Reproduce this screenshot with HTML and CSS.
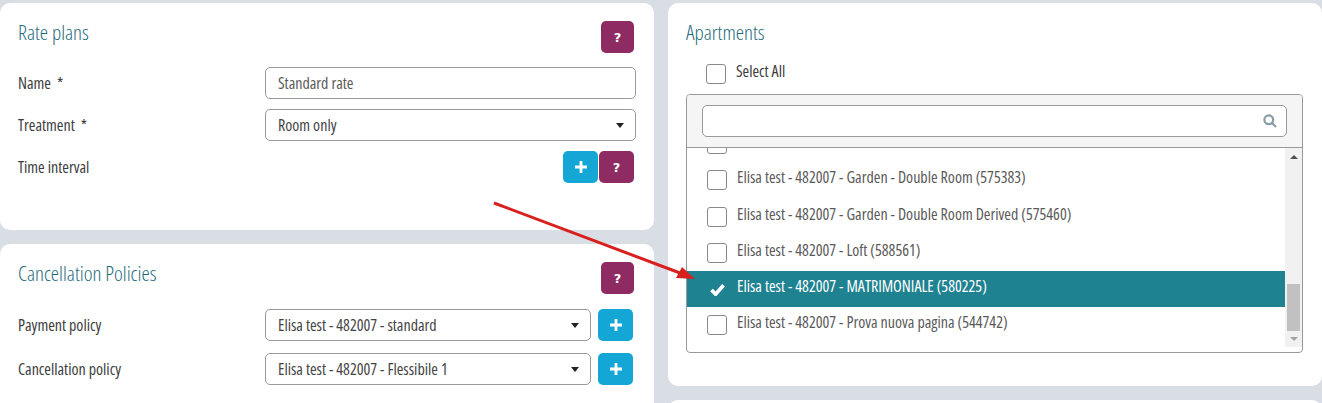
FILE: index.html
```html
<!DOCTYPE html>
<html>
<head>
    <title>Rate plans</title>
    <link rel="stylesheet" href="styles.css">
</head>
<body>

<div class="page">
    <div class="col">
        <div class="card card-rates">
            <div class="card-head">
                <h2>Rate plans</h2>
                <a class="btn btn-help">?</a>
            </div>
            <div class="form-row first">
                <label>Name &nbsp;*</label>
                <div class="control">Standard rate</div>
            </div>
            <div class="form-row">
                <label>Treatment &nbsp;*</label>
                <div class="control select">Room only<span class="caret"></span></div>
            </div>
            <div class="form-row">
                <label>Time interval</label>
                <div class="btn-group">
                    <a class="btn btn-add"><svg viewBox="0 0 12 12"><path d="M4.6 0h2.8v4.6H12v2.8H7.4V12H4.6V7.4H0V4.6h4.6z"/></svg></a>
                    <a class="btn btn-help">?</a>
                </div>
            </div>
        </div>

        <div class="card card-policies">
            <div class="card-head">
                <h2>Cancellation Policies</h2>
                <a class="btn btn-help">?</a>
            </div>
            <div class="form-row first">
                <label>Payment policy</label>
                <div class="control select">Elisa test - 482007 - standard<span class="caret"></span></div>
                <a class="btn btn-add"><svg viewBox="0 0 12 12"><path d="M4.6 0h2.8v4.6H12v2.8H7.4V12H4.6V7.4H0V4.6h4.6z"/></svg></a>
            </div>
            <div class="form-row">
                <label>Cancellation policy</label>
                <div class="control select">Elisa test - 482007 - Flessibile 1<span class="caret"></span></div>
                <a class="btn btn-add"><svg viewBox="0 0 12 12"><path d="M4.6 0h2.8v4.6H12v2.8H7.4V12H4.6V7.4H0V4.6h4.6z"/></svg></a>
            </div>
        </div>
    </div>

    <div class="col">
        <div class="card card-apartments">
            <h2>Apartments</h2>
            <div class="select-all">
                <span class="check"></span>
                <span class="item-text">Select All</span>
            </div>
            <div class="picker">
                <div class="picker-head">
                    <div class="search">
                        <svg viewBox="0 0 14 14"><circle cx="5.8" cy="5.8" r="4.4"/><path d="M9 9l4 4"/></svg>
                    </div>
                </div>
                <div class="picker-body">
                    <div class="list">
                        <div class="item"><span class="check"></span></div>
                        <div class="item"><span class="check"></span><span class="item-text">Elisa test - 482007 - Garden - Double Room (575383)</span></div>
                        <div class="item"><span class="check"></span><span class="item-text">Elisa test - 482007 - Garden - Double Room Derived (575460)</span></div>
                        <div class="item"><span class="check"></span><span class="item-text">Elisa test - 482007 - Loft (588561)</span></div>
                        <div class="item selected">
                            <span class="tick"><svg viewBox="0 0 16 14"><path d="M1.5 7.5l4.5 4.5 8.5-9.5"/></svg></span>
                            <span class="item-text">Elisa test - 482007 - MATRIMONIALE (580225)</span>
                        </div>
                        <div class="item"><span class="check"></span><span class="item-text">Elisa test - 482007 - Prova nuova pagina (544742)</span></div>
                    </div>
                    <div class="scrollbar">
                        <span class="arrow-up"></span>
                        <span class="thumb"></span>
                        <span class="arrow-down"></span>
                    </div>
                </div>
            </div>
        </div>
        <div class="card card-next"></div>
    </div>
</div>

<svg class="pointer" viewBox="0 0 210 85" width="210" height="85">
    <path class="pointer-line" d="M4 3L190 73"/>
    <path class="pointer-head" d="M205 79L186 78L192 67z"/>
</svg>

</body>
</html>
```

FILE: styles.css
```css
html, body {
    margin: 0;
    height: 403px;
    overflow: hidden;
}
body {
    position: relative;
    background: #d9dde4;
    font-family: "Open Sans", "Liberation Sans", sans-serif;
    font-stretch: 75%;
    font-size: 16px;
    color: #3d3d3d;
}
.page {
    display: grid;
    grid-template-columns: 654px 654px;
    column-gap: 14px;
    padding-top: 3px;
}
.col {
    display: flex;
    flex-direction: column;
    row-gap: 14px;
}
.card {
    box-sizing: border-box;
    background: #fff;
    border-radius: 10px;
    padding: 18px 18px 0;
}
.card-rates { height: 227px; }
.card-policies { height: 170px; }
.card-apartments { height: 383px; }
.card-next { height: 20px; }

h2 {
    margin: 0;
    font-size: 21px;
    font-weight: 300;
    line-height: 22px;
    color: #1f6b7c;
}
.card-head {
    display: flex;
    justify-content: space-between;
    padding-right: 2px;
}

/* form rows */
.form-row {
    display: flex;
    align-items: center;
    height: 32px;
    margin-top: 10px;
}
.form-row.first { margin-top: 14px; }
.form-row label {
    width: 247px;
    flex: none;
}
.card-policies .form-row { margin-top: 12px; }
.card-policies .form-row.first { margin-top: 15px; }
.control {
    box-sizing: border-box;
    flex: 1;
    position: relative;
    height: 32px;
    line-height: 30px;
    padding-left: 12px;
    border: 1px solid #999;
    border-radius: 5px;
    color: #5a5a5a;
}
.select { color: #444; }
.caret {
    position: absolute;
    right: 11px;
    top: 13px;
    border-top: 5px solid #222;
    border-left: 4.5px solid transparent;
    border-right: 4.5px solid transparent;
}
.card-policies .control { flex: none; width: 326px; margin-right: 7px; }

/* buttons */
.btn {
    box-sizing: border-box;
    display: flex;
    align-items: center;
    justify-content: center;
    height: 32px;
    border-radius: 5px;
    color: #fff;
}
.btn-help {
    width: 33px;
    background: #8e2b62;
    font-family: "DejaVu Sans", sans-serif;
    font-stretch: normal;
    font-size: 13px;
    font-weight: bold;
}
.btn-add {
    width: 35px;
    background: #14a7d6;
}
.btn-add svg {
    width: 12px;
    height: 12px;
    fill: #fff;
}
.btn-group {
    display: flex;
    column-gap: 1px;
    margin-left: auto;
    margin-right: 2px;
}
.btn-group .btn-help { width: 35px; }

/* apartments */
.select-all {
    display: flex;
    column-gap: 10px;
    margin: 21px 0 10px 20px;
    height: 20px;
}
.check {
    box-sizing: border-box;
    flex: none;
    width: 20px;
    height: 20px;
    border: 1px solid #888;
    border-radius: 3px;
    background: #fff;
}
.item-text {
    line-height: 20px;
    margin-top: -3px;
}
.picker {
    box-sizing: border-box;
    width: 617px;
    height: 259px;
    border: 1px solid #999;
    border-radius: 4px;
    overflow: hidden;
}
.picker-head {
    box-sizing: border-box;
    height: 53px;
    padding: 10px 15px;
    background: #f5f5f5;
    border-bottom: 1px solid #999;
}
.search {
    display: flex;
    align-items: center;
    justify-content: flex-end;
    box-sizing: border-box;
    height: 32px;
    padding-right: 9px;
    background: #fff;
    border: 1px solid #999;
    border-radius: 5px;
}
.search svg {
    width: 14px;
    height: 14px;
    fill: none;
    stroke: #8a9ca6;
    stroke-width: 2.2;
}
.picker-body {
    display: flex;
    height: 205px;
}
.list {
    width: 598px;
    flex: none;
    overflow: hidden;
}
.item {
    display: flex;
    column-gap: 10px;
    box-sizing: border-box;
    height: 36.3px;
    padding: 8px 0 0 20px;
    color: #5a5a5a;
}
.item:first-child { margin-top: -22px; }
.item.selected {
    background: #1f8291;
    color: #fff;
    font-weight: 500;
}
.tick {
    display: flex;
    align-items: center;
    justify-content: center;
    flex: none;
    width: 20px;
    height: 20px;
}
.tick svg {
    width: 15px;
    height: 13px;
    fill: none;
    stroke: #fff;
    stroke-width: 4;
}

/* fake scrollbar, the list above does not really scroll */
.scrollbar {
    box-sizing: border-box;
    display: flex;
    flex-direction: column;
    align-items: center;
    width: 17px;
    height: 199px;
    background: #f1f1f1;
    padding-top: 7px;
}
.arrow-up {
    border-bottom: 4px solid #505050;
    border-left: 4px solid transparent;
    border-right: 4px solid transparent;
}
.thumb {
    width: 13px;
    height: 47px;
    margin-top: 125px;
    background: #c1c1c1;
}
.arrow-down {
    margin-top: 6px;
    border-top: 4px solid #a3a3a3;
    border-left: 4px solid transparent;
    border-right: 4px solid transparent;
}

/* red annotation drawn over the screenshot */
.pointer {
    position: absolute;
    left: 490px;
    top: 200px;
}
.pointer-line {
    fill: none;
    stroke: #d8201f;
    stroke-width: 3;
}
.pointer-head { fill: #d8201f; }
```
